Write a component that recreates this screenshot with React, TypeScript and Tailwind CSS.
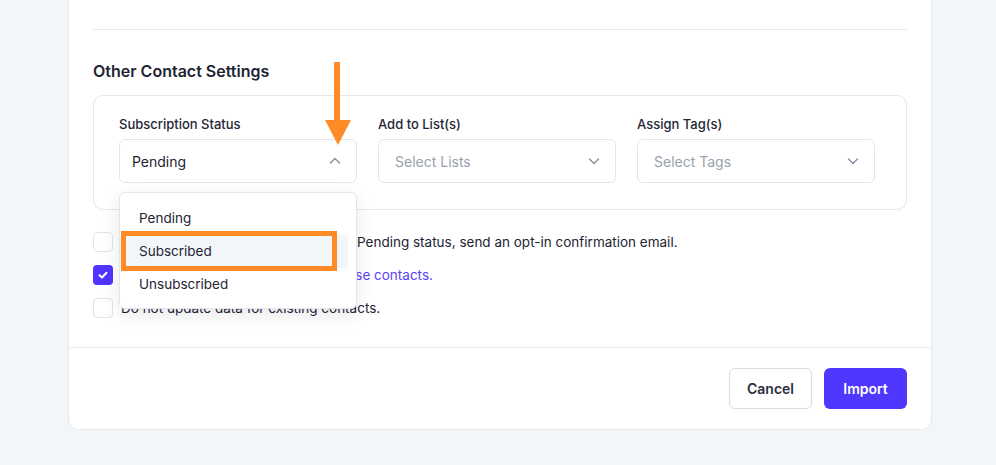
import React from "react";

const Chevron = ({ up = false }: { up?: boolean }) => (
  <svg width="14" height="14" viewBox="0 0 14 14" fill="none" className="shrink-0">
    <path
      d={up ? "M2.5 9 L7 4.5 L11.5 9" : "M2.5 5 L7 9.5 L11.5 5"}
      stroke="#8a94a6"
      strokeWidth="1.5"
      strokeLinecap="round"
      strokeLinejoin="round"
    />
  </svg>
);

const Box = ({ checked = false }: { checked?: boolean }) =>
  checked ? (
    <span className="flex h-[20px] w-[20px] shrink-0 items-center justify-center rounded-[4px] bg-[#5034ff]">
      <svg width="12" height="12" viewBox="0 0 12 12" fill="none">
        <path d="M2.5 6.2 L5 8.5 L9.5 3.8" stroke="#fff" strokeWidth="2" strokeLinecap="round" strokeLinejoin="round" />
      </svg>
    </span>
  ) : (
    <span className="h-[20px] w-[20px] shrink-0 rounded-[4px] border border-[#dfe3ea] bg-white" />
  );

export default function App() {
  return (
    <div
      className="relative h-[465px] w-full overflow-hidden bg-[#f3f6f9]"
      style={{ fontFamily: "Inter, 'Noto Sans', sans-serif" }}
    >
      <div className="ml-[68px] w-[864px] rounded-b-[10px] border border-t-0 border-[#e6eaef] bg-white">
        <div className="px-[24px]">
          <div className="h-[30px] border-b border-[#e5e8ec]" />
          <h2 className="mt-[29px] text-[16px] font-semibold leading-[24px] text-[#1e2434]">Other Contact Settings</h2>
          <div className="relative mt-[12px] h-[115px] rounded-[10px] border border-[#e3e7ec] px-[25px] pt-[18px]">
            <div className="grid grid-cols-[238px_238px_238px] gap-x-[21px]">
              <div>
                <div className="text-[13px] font-medium leading-[20px] text-[#1f2636]">Subscription Status</div>
                <div className="mt-[5px] flex h-[44px] items-center justify-between rounded-[6px] border border-[#e2e6eb] bg-white pl-[12px] pr-[14px]">
                  <span className="text-[14px] text-[#1e2434]">Pending</span>
                  <Chevron up />
                </div>
              </div>
              <div>
                <div className="text-[13px] font-medium leading-[20px] text-[#1f2636]">Add to List(s)</div>
                <div className="mt-[5px] flex h-[44px] items-center justify-between rounded-[6px] border border-[#e2e6eb] bg-white pl-[16px] pr-[14px]">
                  <span className="text-[14px] text-[#9aa1ae]">Select Lists</span>
                  <Chevron />
                </div>
              </div>
              <div>
                <div className="text-[13px] font-medium leading-[20px] text-[#1f2636]">Assign Tag(s)</div>
                <div className="mt-[5px] flex h-[44px] items-center justify-between rounded-[6px] border border-[#e2e6eb] bg-white pl-[16px] pr-[14px]">
                  <span className="text-[14px] text-[#9aa1ae]">Select Tags</span>
                  <Chevron />
                </div>
              </div>
            </div>
            {/* dropdown */}
            <div className="absolute left-[25px] top-[96px] z-10 w-[238px] rounded-[6px] border border-[#e2e6eb] bg-white pb-[7px] pt-[9px] shadow-[0_6px_18px_rgba(30,40,60,0.10)]">
              <div className="flex h-[33px] items-center px-[19px] text-[13.5px] text-[#1e2434]">Pending</div>
              <div className="relative mr-[8px] flex h-[33px] items-center rounded-r-[4px] bg-[#f3f6f9] px-[19px] text-[13.5px] text-[#1e2434]">
                Subscribed
                <span className="absolute left-[1px] top-[-4px] h-[40px] w-[216px] border-[5px] border-[#ff8b26]" />
              </div>
              <div className="flex h-[33px] items-center px-[19px] text-[13.5px] text-[#1e2434]">Unsubscribed</div>
            </div>
          </div>
          <div className="mt-[22px] flex flex-col gap-[13px] pb-[29px]">
            <label className="flex items-center gap-[8px] text-[13.5px] leading-[20px] text-[#1e2434]">
              <Box />
              <span className="whitespace-nowrap">
                <span className="inline-block w-[236px] overflow-hidden align-bottom">For new contacts imported in</span>
                Pending status, send an opt-in confirmation email.
              </span>
            </label>
            <label className="flex items-center gap-[8px] text-[13.5px] leading-[20px] text-[#1e2434]">
              <Box checked />
              <span>
                Update existing data with data of <span className="text-[#5b3ff8]">these contacts.</span>
              </span>
            </label>
            <label className="flex items-center gap-[8px] text-[13.5px] leading-[20px] text-[#1e2434]">
              <Box />
              <span>Do not update data for existing contacts.</span>
            </label>
          </div>
        </div>
        <div className="flex justify-end gap-[12px] border-t border-[#e5e8ec] px-[24px] pb-[20px] pt-[20px]">
          <button className="h-[41px] w-[83px] rounded-[6px] border border-[#d9dde3] bg-white text-[14px] font-semibold text-[#2a2f3a]">
            Cancel
          </button>
          <button className="h-[41px] w-[83px] rounded-[6px] bg-[#4f37fd] text-[14px] font-semibold text-white">
            Import
          </button>
        </div>
      </div>
      {/* orange arrow annotation */}
      <svg className="absolute left-[324px] top-[62px] z-20" width="28" height="84" viewBox="0 0 28 84">
        <rect x="10" y="0" width="6" height="60" fill="#ff8b26" />
        <polygon points="1,58 27,58 14,83" fill="#ff8b26" />
      </svg>
    </div>
  );
}
